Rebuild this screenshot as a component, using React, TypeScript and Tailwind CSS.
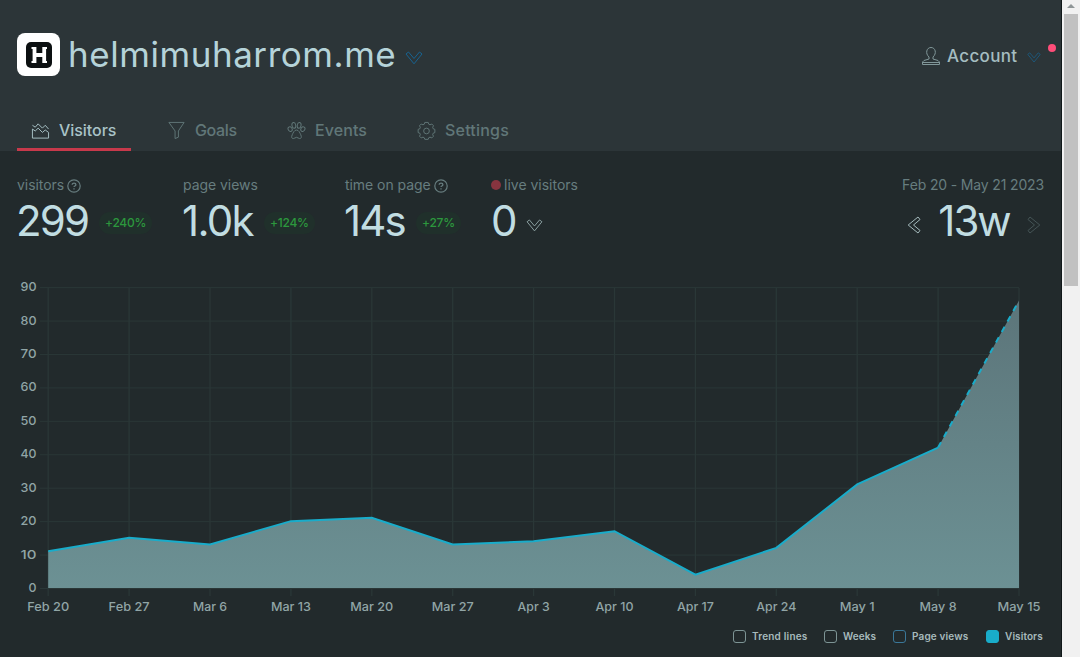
import type { ReactNode } from 'react';

const labels = ['Feb 20', 'Feb 27', 'Mar 6', 'Mar 13', 'Mar 20', 'Mar 27', 'Apr 3', 'Apr 10', 'Apr 17', 'Apr 24', 'May 1', 'May 8', 'May 15'];
const labelWidths = [42, 41, 34, 40, 43, 42, 32, 38, 37, 40, 35, 37, 43];
const values = [11, 15, 13, 20, 21, 13, 14, 17, 4, 12, 31, 42, 86];
const ticks = [0, 10, 20, 30, 40, 50, 60, 70, 80, 90];

const x = (i: number) => 48.2 + i * 80.9;
const y = (v: number) => 322 - v * 3.343;

const tabs = [
  { name: 'Visitors', width: 'w-[114px]', spacing: 'tracking-[-0.05px]', icon: <AreaIcon />, active: true },
  { name: 'Goals', width: 'w-[98px]', spacing: 'tracking-[-0.35px]', icon: <FunnelIcon /> },
  { name: 'Events', width: 'w-[108px]', spacing: 'tracking-[0.1px]', icon: <PawIcon /> },
  { name: 'Settings', width: 'w-[118px]', spacing: 'tracking-[0.2px]', icon: <GearIcon /> },
];

const legend = [
  { name: 'Trend lines', box: 'border-[#7d9495]', width: 'w-[91px]', spacing: 'tracking-[0.2px]' },
  { name: 'Weeks', box: 'border-[#7d9495]', width: 'w-[69px]', spacing: 'tracking-[0.1px]' },
  { name: 'Page views', box: 'border-[#3a7799]', width: 'w-[93px]', spacing: 'tracking-[0.15px]' },
  { name: 'Visitors', box: 'border-[#19acca] bg-[#19acca]', width: 'w-[57px]', spacing: 'tracking-[0.1px]' },
];

function Icon({ children }: { children: ReactNode }) {
  return (
    <svg viewBox="0 0 20 20" fill="none" stroke="currentColor" strokeWidth="1" strokeLinejoin="round" className="w-[19px] h-[19px] mt-0.5 shrink-0">
      {children}
    </svg>
  );
}

function AreaIcon() {
  return (
    <Icon>
      <path d="M1.500 8.500 4.500 10.500 7.500 7.500l4.500 4.500 3-2.500 3.500 2.500v6h-17z" />
      <path d="M1.500 4.500 4.500 6.500 7.500 3l4.500 4.500 3-3 3.500 4" />
    </Icon>
  );
}

function FunnelIcon() {
  return (
    <Icon>
      <path d="M2 1.500h16l-6 9V17l-3.500 1.500v-8z" />
    </Icon>
  );
}

function PawIcon() {
  return (
    <Icon>
      <ellipse cx="7.200" cy="4.600" rx="2" ry="3.100" transform="rotate(-10 7.2 4.6)" />
      <ellipse cx="12.800" cy="4.600" rx="2" ry="3.100" transform="rotate(10 12.8 4.6)" />
      <ellipse cx="3.300" cy="8.600" rx="2" ry="2.500" transform="rotate(-35 3.3 8.6)" />
      <ellipse cx="16.700" cy="8.600" rx="2" ry="2.500" transform="rotate(35 16.7 8.6)" />
      <path d="M10 9.500c-2.500 0-3.500 3-4.500 5-1.200 2.500-.5 4 1.200 4 1.500 0 1.800-1.300 3.300-1.300s1.800 1.300 3.300 1.300c1.700 0 2.400-1.500 1.200-4-1-2-2-5-4.500-5z" />
    </Icon>
  );
}

function GearIcon() {
  return (
    <Icon>
      <path d="m8.200 1.500h3.600l.6 1.900 1.300.6 1.900-.8 1.700 1.700-.8 2 .6 1.300 1.700.6v3.400l-1.700.6-.6 1.300.8 2-1.700 1.700-1.900-.8-1.300.6-.6 1.700H8.200l-.6-1.700-1.300-.6-1.900.8-1.700-1.700.8-2-.6-1.300-1.700-.6V8.800l1.700-.6.6-1.300-.8-2 1.700-1.700 1.900.8 1.300-.6z" />
      <circle cx="10" cy="10.500" r="3" />
    </Icon>
  );
}

function Chevron({ className }: { className: string }) {
  return (
    <svg viewBox="0 0 18 14" fill="none" stroke="currentColor" strokeWidth="1" strokeLinejoin="round" className={`shrink-0 ${className}`}>
      <path d="M1 3 3.500 1 9 7.500 14.500 1 17 3 9 12.800z" />
    </svg>
  );
}

function Help() {
  return (
    <svg viewBox="0 0 14 14" fill="none" stroke="currentColor" strokeWidth="1.200" className="w-3.5 h-3.5 mt-px shrink-0">
      <circle cx="7" cy="7" r="6.200" />
      <path d="M5.200 5.800c0-2.400 3.700-2.300 3.700 0 0 1.300-1.900 1.200-1.900 2.300M7 9.200v1.400" strokeWidth="1.300" />
    </svg>
  );
}

function Stat({ label, value, change, width, spacing, valueWidth, help }: {
  label: string; value: string; change: string; width: string; spacing: string; valueWidth: string; help?: boolean;
}) {
  return (
    <div className={width}>
      <div className="h-5 flex items-center gap-[3px] text-sm tracking-[-0.05px] text-[#677d7f] whitespace-nowrap">
        {label}{help && <Help />}
      </div>
      <div className="h-[52px] flex items-center">
        <span className={`-ml-px text-[42px] leading-none font-normal text-[#c1dde2] whitespace-nowrap shrink-0 ${spacing} ${valueWidth}`}>{value}</span>
        <span className="h-[22px] mt-1 px-1.5 flex items-center rounded-full bg-[#20302b] text-xs font-medium tracking-[-0.25px] text-[#2c983d]">{change}</span>
      </div>
    </div>
  );
}

function Chart() {
  const points = values.map((v, i) => `${x(i)},${y(v)}`);
  return (
    <svg width="1061" height="354" viewBox="0 0 1061 354" className="block">
      <defs>
        <linearGradient id="area" x1="0" y1="0" x2="0" y2="1">
          <stop offset="0" stopColor="#5c757a" />
          <stop offset="1" stopColor="#6c9194" />
        </linearGradient>
      </defs>
      {ticks.map((t) => (
        <g key={t}>
          <line x1="40" x2="1019" y1={y(t) + 0.5} y2={y(t) + 0.5} stroke="#2a3737" />
          <text x="36.500" y={y(t) + 4} textAnchor="end" textLength={t ? 16 : 8} lengthAdjust="spacingAndGlyphs" fontSize="12" fontWeight="500" fill="#91a5a6">{t}</text>
        </g>
      ))}
      {labels.map((l, i) => (
        <g key={l}>
          <line x1={x(i)} x2={x(i)} y1="22" y2="330" stroke="#2a3737" strokeWidth="1.300" />
          <text x={x(i)} y="345" textAnchor="middle" textLength={labelWidths[i]} lengthAdjust="spacingAndGlyphs" fontSize="12" fontWeight="500" fill="#91a5a6">{l}</text>
        </g>
      ))}
      <polygon points={`${x(0)},322 ${points.join(' ')} ${x(12)},322`} fill="url(#area)" />
      <polyline points={points.slice(0, 12).join(' ')} fill="none" stroke="#19acca" strokeWidth="2" />
      <polyline points={points.slice(11).join(' ')} fill="none" stroke="#19acca" strokeWidth="2" strokeDasharray="6 6" />
    </svg>
  );
}

export default function App() {
  return (
    <div className="w-[1080px] h-[657px] flex overflow-hidden bg-[#222a2c] font-['Inter',sans-serif]">
      <main className="w-[1062px] shrink-0 border-r border-[#101819]">
        <header className="h-[151px] bg-[#2c3538] flex flex-col">
          <div className="h-[109px] pl-[17px] flex items-center justify-between">
            <div className="flex items-center">
              <div className="w-[43px] h-[43px] rounded-lg bg-white flex items-center justify-center">
                <svg viewBox="0 0 26 26" className="w-[26px] h-[26px]">
                  <rect width="26" height="26" rx="5" fill="#0c1011" />
                  <path d="M8.500 5v16M18.200 5v16M8 13h10" stroke="white" strokeWidth="3.800" />
                  <path d="M5.500 6H8M18 6h3M5.500 20H8M18 20h3" stroke="white" strokeWidth="2" />
                </svg>
              </div>
              <h1 className="w-[337px] ml-2 -mt-px text-[35px] leading-none tracking-[0.55px] font-normal text-[#b5d3d9] whitespace-nowrap">helmimuharrom.me</h1>
              <Chevron className="w-[18px] h-3.5 mt-1.5 text-[#176391]" />
            </div>
            <div className="relative mt-[3px] flex items-center pr-5">
              <svg viewBox="0 0 20 20" fill="none" stroke="#819799" className="w-5 h-5">
                <path d="M8 13v-2C4 7.500 5.500 1.500 10 1.500s6 6 2 9.500v2l5 1.500 1.500 1.500v2.500h-17V16L3 14.500zM1.500 16.500h17" />
              </svg>
              <span className="w-[80px] ml-1.5 mt-px text-[17px] font-medium tracking-[0.35px] text-[#a5bdc0]">Account</span>
              <Chevron className="w-3.5 h-[11px] mt-0.5 text-[#1b618a]" />
              <span className="absolute right-[5px] top-px w-2 h-2 rounded-full bg-[#ff4d79]" />
            </div>
          </div>
          <nav className="h-[42px] pl-[17px] flex gap-[22px]">
            {tabs.map((tab) => (
              <button key={tab.name} className={`h-[42px] pt-0.5 pl-3.5 flex items-center gap-[9px] border-b-[3px] text-base font-medium ${tab.width} ${tab.spacing} ${tab.active ? 'border-[#c7394b] text-[#a9c3c7]' : 'border-transparent text-[#617778]'}`}>
                {tab.icon}{tab.name}
              </button>
            ))}
          </nav>
        </header>

        <section className="h-[115px] px-[17px] pt-6 flex">
          <Stat label="visitors" value="299" change="+240%" width="w-[166px]" spacing="tracking-[-1.8px]" valueWidth="w-[83px]" help />
          <Stat label="page views" value="1.0k" change="+124%" width="w-[162px]" spacing="tracking-[-1.7px]" valueWidth="w-[82px]" />
          <Stat label="time on page" value="14s" change="+27%" width="w-[146px]" spacing="tracking-[-1.8px]" valueWidth="w-[72px]" help />
          <div className="w-[120px]">
            <div className="h-5 flex items-center gap-[3px] text-sm text-[#677d7f] whitespace-nowrap">
              <span className="w-2.5 h-2.5 rounded-full bg-[#87343f]" />live visitors
            </div>
            <div className="h-[52px] flex items-center text-[#c1dde2]">
              <span className="w-[35px] text-[42px] leading-none font-normal">0</span>
              <Chevron className="w-[17px] h-[13px] mt-2 text-[#91a6a8]" />
            </div>
          </div>
          <div className="ml-auto w-[142px]">
            <div className="h-5 flex items-center justify-end text-sm tracking-[-0.15px] text-[#677d7f] whitespace-nowrap">Feb 20 - May 21 2023</div>
            <div className="h-[52px] flex items-center justify-between">
              <Chevron className="w-[18px] h-3.5 mt-2 ml-[3px] rotate-90 text-[#a4babc]" />
              <span className="text-[42px] leading-none font-normal tracking-[-2px] text-[#c1dde2]">13w</span>
              <Chevron className="w-[18px] h-3.5 mt-2 mr-px -rotate-90 text-[#455456]" />
            </div>
          </div>
        </section>

        <Chart />

        <footer className="h-8 pl-[733px] flex items-center">
          {legend.map((item) => (
            <div key={item.name} className={`flex items-center gap-1.5 text-[10px] font-semibold text-[#a7babd] whitespace-nowrap ${item.width} ${item.spacing}`}>
              <span className={`w-[13px] h-[13px] rounded-[3px] border shrink-0 ${item.box}`} />
              {item.name}
            </div>
          ))}
        </footer>
      </main>
      <aside className="w-[18px] shrink-0 bg-[#f1f1f1] flex flex-col items-center">
        <svg viewBox="0 0 14 14" className="w-3.5 h-3.5"><path d="m3 8 4-4 4 4z" fill="#8f9697" /></svg>
        <div className="w-3.5 h-[272px] bg-[#c1c1c1]" />
      </aside>
    </div>
  );
}
